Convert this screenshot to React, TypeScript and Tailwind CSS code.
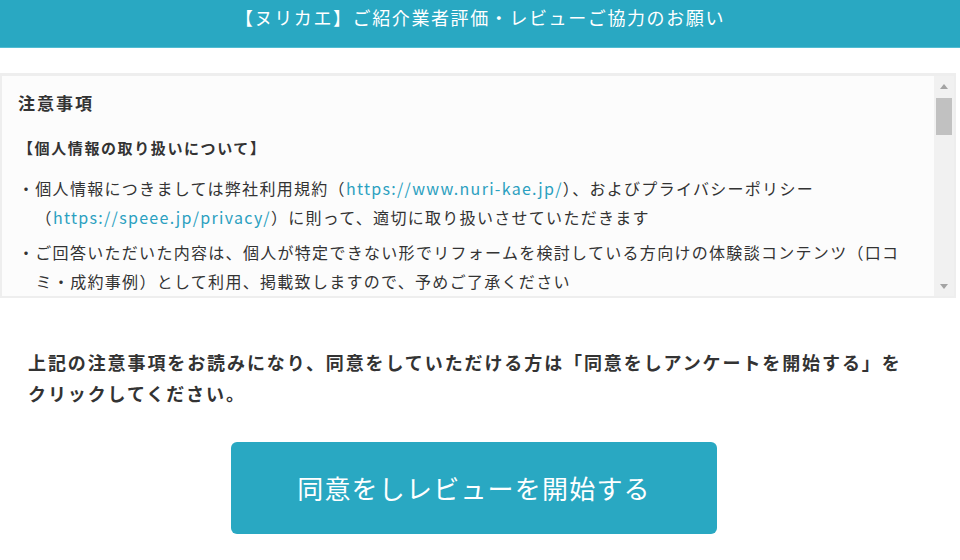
const FONT = { fontFamily: '"Noto Sans CJK JP", "Noto Sans", sans-serif' };

function ScrollTrack() {
  return (
    <div className="w-[20px] shrink-0 bg-[#f1f1f1] flex flex-col items-center">
      <div className="h-[17px] flex items-center justify-center pt-[3px]">
        <svg width="8" height="5" viewBox="0 0 8 5">
          <path d="M0 5 L4 0 L8 5 Z" fill="#a3a3a3" />
        </svg>
      </div>
      <div className="mt-[5px] w-[16px] h-[37px] bg-[#c1c1c1]" />
      <div className="flex-1" />
      <div className="h-[17px] flex items-center justify-center pb-[3px]">
        <svg width="8" height="5" viewBox="0 0 8 5">
          <path d="M0 0 L8 0 L4 5 Z" fill="#a3a3a3" />
        </svg>
      </div>
    </div>
  );
}

export default function App() {
  return (
    <div className="w-[960px] h-[560px] bg-white overflow-hidden" style={FONT}>
      {/* Header */}
      <header className="h-[48px] bg-[#29a8c2] border-b border-[#52bcd2] text-center text-white text-[18px] leading-[26px] tracking-[1.6px] pt-[4px]">
        【ヌリカエ】ご紹介業者評価・レビューご協力のお願い
      </header>

      {/* Notice box */}
      <section className="mt-[25px] w-[956px] h-[225px] bg-[#fcfcfc] border-2 border-t-[3px] border-[#eeeeee] flex">
        <div className="flex-1 overflow-hidden pl-[16px] pr-[16px] text-[#333333]">
          <h2 className="pt-[13px] text-[17px] leading-[28px] font-bold tracking-[2px]">注意事項</h2>
          <h3 className="mt-[17px] text-[15px] leading-[28px] font-bold tracking-[1.6px]">
            【個人情報の取り扱いについて】
          </h3>
          <ul className="mt-[12px] flex flex-col gap-[6px] text-[16px] leading-[29px] tracking-[1.3px]">
            <li className="pl-[1.1em] -indent-[1.1em]">
              ・個人情報につきましては弊社利用規約（<a className="text-[#2ba0c0] whitespace-nowrap">https://www.nuri-kae.jp/</a>）、およびプライバシーポリシー（<a className="text-[#2ba0c0] whitespace-nowrap">https://speee.jp/privacy/</a>）に則って、適切に取り扱いさせていただきます
            </li>
            <li className="pl-[1.1em] -indent-[1.1em]">
              ・ご回答いただいた内容は、個人が特定できない形でリフォームを検討している方向けの体験談コンテンツ（口コミ・成約事例）として利用、掲載致しますので、予めご了承ください
            </li>
          </ul>
        </div>
        <ScrollTrack />
      </section>

      {/* Agreement */}
      <p className="mt-[49px] ml-[28px] w-[880px] text-[18px] leading-[31px] font-bold tracking-[1.9px] text-[#333333]">
        上記の注意事項をお読みになり、同意をしていただける方は「同意をしアンケートを開始する」をクリックしてください。
      </p>

      <div className="w-[948px] flex justify-center mt-[33px]">
        <button className="w-[486px] h-[92px] rounded-[6px] bg-[#29a8c2] text-white text-[26px] tracking-[1.2px] leading-none">
          同意をしレビューを開始する
        </button>
      </div>
    </div>
  );
}
